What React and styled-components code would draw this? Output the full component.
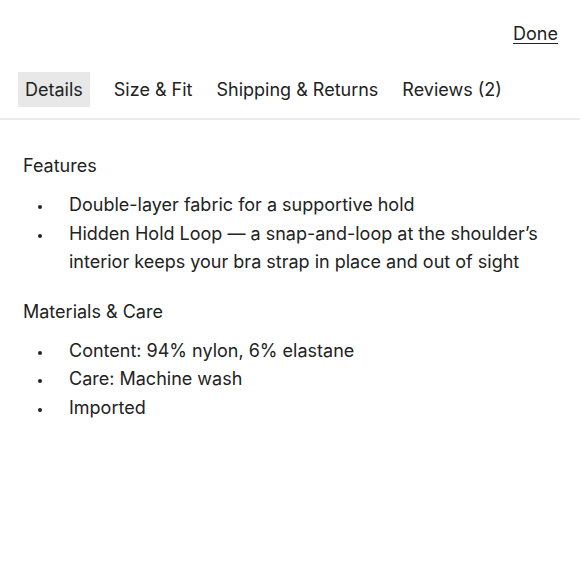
import React from "react";
import styled, { createGlobalStyle } from "styled-components";

const GlobalStyle = createGlobalStyle`
  html, body {
    margin: 0;
    padding: 0;
    background: #fff;
  }
  body {
    font-family: Inter, "Noto Sans", Arial, sans-serif;
    color: #222;
  }
`;

const tabs = ["Details", "Size & Fit", "Shipping & Returns", "Reviews (2)"];

const sections = [
  {
    title: "Features",
    items: [
      "Double-layer fabric for a supportive hold",
      "Hidden Hold Loop \u2014 a snap-and-loop at the shoulder\u2019s interior keeps your bra strap in place and out of sight",
    ],
  },
  {
    title: "Materials & Care",
    items: [
      "Content: 94% nylon, 6% elastane",
      "Care: Machine wash",
      "Imported",
    ],
  },
];

export default function App() {
  return (
    <Wrapper>
      <GlobalStyle />
      <Header>
        <DoneLink href="#">Done</DoneLink>
      </Header>
      <TabBar>
        {tabs.map((t, i) => (
          <Tab key={t} $active={i === 0}>
            {t}
          </Tab>
        ))}
      </TabBar>
      <Content>
        {sections.map((s) => (
          <Section key={s.title}>
            <Heading>{s.title}</Heading>
            <List>
              {s.items.map((item) => (
                <Item key={item}>{item}</Item>
              ))}
            </List>
          </Section>
        ))}
      </Content>
    </Wrapper>
  );
}

const Wrapper = styled.div`
  width: 580px;
  min-height: 580px;
  background: #fff;
`;

const Header = styled.div`
  display: flex;
  justify-content: flex-end;
  padding: 22px 22px 0 0;
  height: 51px;
  box-sizing: border-box;
`;

const DoneLink = styled.a`
  font-size: 18px;
  line-height: 24px;
  color: #222;
  text-decoration: underline;
  text-underline-offset: 3px;
  text-decoration-thickness: 1px;
`;

const TabBar = styled.div`
  display: flex;
  align-items: center;
  gap: 12px;
  padding: 21px 18px 11px;
  border-bottom: 2px solid #ebebeb;
`;

const Tab = styled.button`
  border: none;
  margin: 0;
  font-family: inherit;
  font-size: 18px;
  line-height: 35px;
  padding: 0 6px;
  color: #222;
  background: ${(p) => (p.$active ? "#e8e8e8" : "transparent")};
  cursor: pointer;

  &:first-child {
    padding: 0 7px;
    margin-right: 6px;
  }
`;

const Content = styled.div`
  padding: 32px 22px 0 23px;
`;

const Section = styled.div`
  margin-bottom: 21px;
`;

const Heading = styled.h3`
  margin: 0 0 11px;
  font-size: 18px;
  font-weight: 400;
  line-height: 28px;
`;

const List = styled.ul`
  margin: 0;
  padding: 0;
  list-style: none;
`;

const Item = styled.li`
  display: flex;
  align-items: flex-start;
  font-size: 18px;
  line-height: 28.5px;

  &::before {
    content: "";
    flex: 0 0 4px;
    width: 4px;
    height: 4px;
    margin: 14px 27px 0 15px;
    border-radius: 50%;
    background: #222;
  }
`;
